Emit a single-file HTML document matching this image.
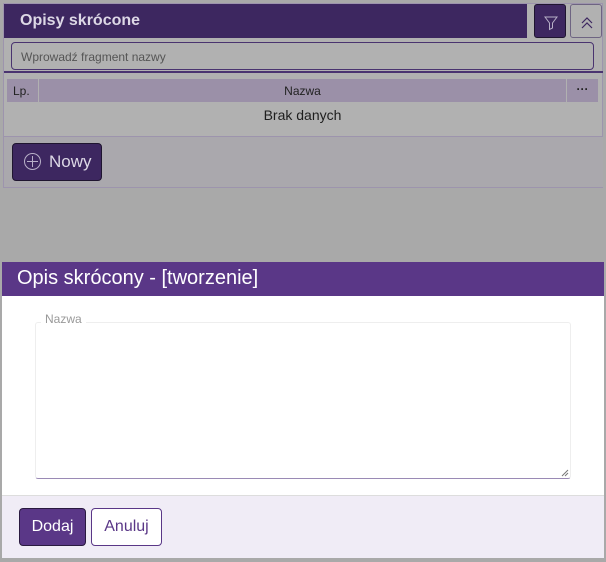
<!DOCTYPE html>
<html><head><style>
*{box-sizing:border-box;margin:0;padding:0}
body{width:606px;height:562px;background:#a9a9a9;font-family:"Liberation Sans",sans-serif;position:relative;overflow:hidden}
.a{position:absolute}
</style></head><body>
<div class="a" style="left:3px;top:3px;width:600px;height:185px;background:#b1b1b1;border:1px solid #9d94ad"></div>
<div class="a" style="left:4px;top:4px;width:523px;height:34px;background:#3d2760;color:#ddd8e6;font-weight:bold;font-size:16px;padding:8px 0 0 16px">Opisy skrócone</div>
<div class="a" style="left:534px;top:4px;width:32px;height:34px;background:#3d2760;border:1px solid #1f1530;border-radius:3px">
<svg width="32" height="34" viewBox="0 0 32 34"><path d="M10 12h12l-4.5 6v5l-3 1.5v-6.5z" fill="none" stroke="#b8b0c8" stroke-width="1"/></svg></div>
<div class="a" style="left:570px;top:4px;width:32px;height:34px;background:#b1b1b1;border:1px solid #6e6482;border-radius:3px">
<svg width="32" height="34" viewBox="0 0 32 34"><path d="M11 18l5-5 5 5M11 23l5-5 5 5" fill="none" stroke="#3d2760" stroke-width="1.2"/></svg></div>
<div class="a" style="left:11px;top:42px;width:583px;height:28px;border:1px solid #4a3470;border-radius:4px;font-size:12px;color:#555;padding:7px 0 0 9px">Wprowadź fragment nazwy</div>
<div class="a" style="left:4px;top:71px;width:599px;height:2px;background:#4a3470"></div>
<div class="a" style="left:7px;top:79px;width:591px;height:23px;background:#9b90a8"></div>
<div class="a" style="left:7px;top:79px;width:26px;height:23px;font-size:12px;color:#222;padding:5px 0 0 6px">Lp.</div>
<div class="a" style="left:38px;top:79px;width:1px;height:23px;background:#b1b1b1"></div>
<div class="a" style="left:566px;top:79px;width:1px;height:23px;background:#b1b1b1"></div>
<div class="a" style="left:39px;top:79px;width:527px;height:23px;font-size:12px;color:#222;text-align:center;padding-top:5px">Nazwa</div>
<div class="a" style="left:567px;top:79px;width:31px;height:23px;font-size:12px;color:#222;text-align:center;padding-top:3px;font-weight:bold">···</div>
<div class="a" style="left:7px;top:107px;width:591px;height:20px;font-size:14px;color:#1e1e1e;text-align:center">Brak danych</div>
<div class="a" style="left:4px;top:136px;width:599px;height:1px;background:#9d94ad"></div>
<div class="a" style="left:4px;top:137px;width:599px;height:50px;background:#aaa8ad"></div>
<div class="a" style="left:12px;top:143px;width:90px;height:38px;background:#3d2760;border:1px solid #1f1530;border-radius:4px;color:#ddd8e6;font-size:17px;padding:8px 0 0 36px">Nowy</div>
<div class="a" style="left:24px;top:153px;width:17px;height:17px;border:1.3px solid #b8b0c8;border-radius:50%"></div>
<div class="a" style="left:27px;top:161px;width:11px;height:1.3px;background:#b8b0c8"></div>
<div class="a" style="left:32px;top:156px;width:1.3px;height:11px;background:#b8b0c8"></div>

<div class="a" style="left:2px;top:262px;width:602px;height:296px;background:#fff"></div>
<div class="a" style="left:2px;top:262px;width:602px;height:34px;background:#5a3787;color:#fff;font-size:20px;padding:5px 0 0 15px">Opis skrócony - [tworzenie]</div>
<div class="a" style="left:35px;top:322px;width:536px;height:157px;border:1px solid #eee;border-bottom:1px solid #9a8ab5;border-radius:3px"></div>
<div class="a" style="left:41px;top:312px;background:#fff;padding:0 4px;font-size:12px;color:#999">Nazwa</div>
<svg class="a" style="left:561px;top:469px" width="8" height="8"><path d="M1 7L7 1M4 7L7 4" stroke="#777" stroke-width="1"/></svg>
<div class="a" style="left:2px;top:495px;width:602px;height:63px;background:#f0ecf6;border-top:1px solid #ddd"></div>
<div class="a" style="left:19px;top:508px;width:67px;height:38px;background:#5a3787;border:1px solid #2a1a40;border-radius:4px;color:#fff;font-size:16px;text-align:center;padding-top:9px">Dodaj</div>
<div class="a" style="left:91px;top:508px;width:71px;height:38px;background:#fff;border:1px solid #5a3787;border-radius:4px;color:#5a3787;font-size:16px;text-align:center;padding-top:9px">Anuluj</div>
</body></html>
